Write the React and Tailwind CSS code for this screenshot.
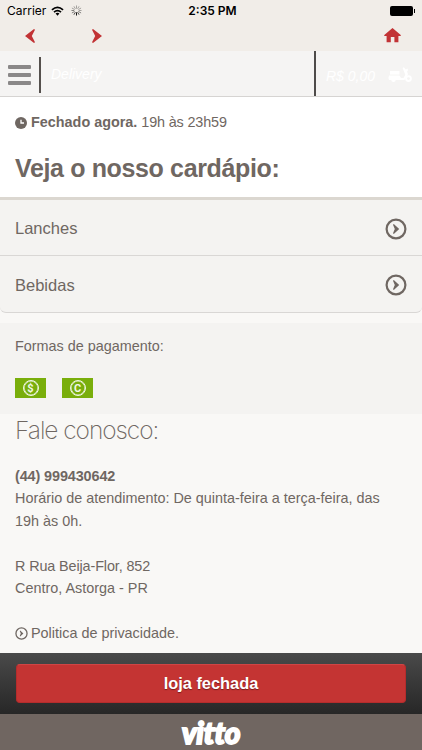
const menu = ["Lanches", "Bebidas"];

const Arrow = ({ className }) => (
  <svg viewBox="0 0 10 14" className={className}>
    <path d="M1 0 L10 7 L1 14 L0 13.2 L3.2 7 L0 .8 Z" fill="#c23335" />
  </svg>
);

const CircleArrow = ({ className }) => (
  <svg viewBox="0 0 22 22" className={className}>
    <circle cx="11" cy="11" r="9.4" fill="none" stroke="currentColor" strokeWidth="2.2" />
    <path d="M8.8 6 L14.2 11 L8.8 16 L8 15.2 L9.8 11 L8 6.8 Z" fill="currentColor" />
  </svg>
);

const Money = ({ symbol }) => (
  <div className="flex h-5 w-[31px] items-center justify-center bg-[#79ae0b]">
    <div className="flex size-4 items-center justify-center rounded-full border border-white/90 font-['Roboto',sans-serif] text-[11px] leading-none font-bold text-white/90 shadow-[inset_0_0_0_0.6px_#ffffffcc]">
      {symbol}
    </div>
  </div>
);

const StatusBar = () => (
  <div className="flex h-[21px] items-center px-[7px] font-['Inter',sans-serif] text-xs text-black">
    <div className="flex flex-1 items-center">
      <span>Carrier</span>
      <svg viewBox="0 0 14 10" className="ml-[5px] h-[10px] w-[13px]" fill="none" stroke="#000" strokeWidth="1.8">
        <path d="M1 3.8 Q7 -1.6 13 3.8" />
        <path d="M3.2 6.2 Q7 2.8 10.8 6.2" />
        <path d="M7 10 L4.9 7.8 Q7 6.2 9.1 7.8 Z" fill="#000" stroke="none" />
      </svg>
      <svg viewBox="0 0 12 12" className="ml-[7px] size-[11px]" stroke="#000" strokeWidth="1">
        <path d="M6 8v3.5" />
        <path d="M7.2 7.8l1.6 2.8M4.8 7.8l-1.6 2.8" opacity=".75" />
        <path d="M4 7l-3 1.7M8 7l3 1.7M.5 6h3" opacity=".5" />
        <path d="M4 5l-3-1.7M4.8 4.2L3.2 1.4M6 4V.5M7.2 4.2l1.6-2.8M8 5l3-1.7M8.5 6h3" opacity=".35" />
      </svg>
    </div>
    <span className="pl-[3px] font-semibold">2:35 PM</span>
    <div className="flex flex-1 items-center justify-end">
      <div className="h-[10px] w-[23px] rounded-[2px] bg-black" />
      <div className="ml-px h-1 w-px bg-black" />
    </div>
  </div>
);

const Header = () => (
  <div className="flex h-[46px] shrink-0 items-center border-b border-[#d6d4d2] bg-[#f5f4f3] text-white italic shadow-[0_1px_1px_#e9e8e7]">
    <div className="mt-[2px] ml-2 flex w-[23px] flex-col gap-1">
      <div className="h-1 rounded-[1px] bg-[#8a8888]" />
      <div className="h-1 rounded-[1px] bg-[#8a8888]" />
      <div className="h-1 rounded-[1px] bg-[#8a8888]" />
    </div>
    <div className="mt-[3px] ml-2 h-9 w-[2px] bg-[#55504d]" />
    <span className="ml-[10px] flex-1 pt-px text-[14px]">Delivery</span>
    <div className="h-full w-[2px] bg-[#4e4b4a]" />
    <div className="flex w-[106px] items-center pt-1 pl-[10px]">
      <span className="w-[62px] text-sm">R$ 0,00</span>
      <svg viewBox="0 0 24 17" className="-mt-[3px] h-[17px] w-6" fill="#fff">
        <path d="M2 5h9.5v3.6H2z" />
        <path d="M1 9.5h10.5l1.5 2.5h2.5l1.8-3.2L14.6 2l1.2-.8 2 2.2 2-1V5l-.8.3 1 3-3.6 5.8H1Q0 11.5 1 9.5z" />
        <circle cx="5.5" cy="13.7" r="2.3" />
        <circle cx="20.5" cy="12.6" r="2.4" fill="none" stroke="#fff" strokeWidth="1.9" />
      </svg>
    </div>
  </div>
);

export default function App() {
  return (
    <div className="flex h-[750px] w-[422px] flex-col overflow-hidden bg-[#f9f8f6] font-['Liberation_Sans',Arial,sans-serif] text-[15px] text-[#6f6762]">
      <div className="h-[51px] shrink-0 bg-[#f1ede8]">
        <StatusBar />
        <div className="flex items-center pt-[7px] pr-[21px] pl-[25px]">
          <Arrow className="h-[14px] w-[10px] rotate-180" />
          <Arrow className="ml-[57px] h-[14px] w-[10px]" />
          <svg viewBox="0 0 17 15" className="ml-auto h-[15px] w-[17px]" fill="#c23335">
            <path d="M8.5 0 L17 7.2 L16.4 8 H14.4 V14.2 H10.4 V9 H6.8 V14.2 H2.6 V8 H.6 L0 7.2 Z" />
          </svg>
        </div>
      </div>
      <Header />

      <div className="h-[100px] shrink-0 bg-white px-[15px] pt-[15px]">
        <div className="flex h-[22px] items-center text-[14.4px]">
          <svg viewBox="0 0 12 12" className="mr-1 size-3">
            <circle cx="6" cy="6" r="6" fill="#6f6762" />
            <path d="M6 2.8V6h3" fill="none" stroke="#fff" strokeWidth="1.3" />
          </svg>
          <b>Fechado agora.</b>
          <span className="ml-1 tracking-[-0.15px]">19h às 23h59</span>
        </div>
        <h1 className="mt-[18px] text-[25px] leading-8 font-bold tracking-[-0.36px] whitespace-nowrap">
          Veja o nosso cardápio:
        </h1>
      </div>

      <div className="shrink-0 rounded-b-md border-b border-[#d9d7d5] bg-[#f4f3f1]">
        <div className="h-[3px] bg-[#dbd7d0]" />
        {menu.map((item, index) => (
          <div
            key={index}
            className="flex h-14 items-center justify-between border-[#d9d7d5] px-[15px] pt-[2px] text-[16.5px] not-last:border-b"
          >
            <span>{item}</span>
            <CircleArrow className="size-[22px]" />
          </div>
        ))}
      </div>

      <div className="mt-[10px] h-[91px] shrink-0 bg-[#f4f3f1] px-[15px] pt-3">
        <div className="text-[14.4px] leading-[22px]">Formas de pagamento:</div>
        <div className="mt-[21px] flex gap-4">
          <Money symbol="$" />
          <Money symbol="C" />
        </div>
      </div>

      <div className="min-h-0 flex-1 px-[15px] text-[14.4px] leading-[22.4px]">
        <h2 className="h-[51px] font-['Inter',sans-serif] text-[24.5px] leading-[33px] font-extralight tracking-[-1.05px]">
          Fale conosco:
        </h2>
        <b className="tracking-[-0.1px]">(44) 999430642</b>
        <p>Horário de atendimento: De quinta-feira a terça-feira, das 19h às 0h.</p>
        <p className="mt-[22.4px]">
          <span className="tracking-[-0.12px]">R Rua Beija-Flor, 852</span>
          <br />
          Centro, Astorga - PR
        </p>
        <p className="mt-[22.4px] flex items-center gap-[3px]">
          <CircleArrow className="size-[13px]" />
          Politica de privacidade.
        </p>
      </div>

      <div className="h-[61px] shrink-0 bg-linear-to-b from-[#4a4a4a] to-[#272727] px-4 pt-[11px]">
        <button className="h-[39px] w-[390px] rounded border border-[#b52c2c] border-t-[#d04545] bg-[#c43433] text-[16.4px] font-bold text-white [text-shadow:0_1px_1px_#7a1c1c]">
          loja fechada
        </button>
      </div>
      <div className="flex h-9 shrink-0 items-center justify-center bg-[#706661] font-['Lato',sans-serif] text-[30px] leading-9 font-black tracking-[-0.3px] text-white italic [-webkit-text-stroke:1.8px_white]">
        vitto
      </div>
    </div>
  );
}
